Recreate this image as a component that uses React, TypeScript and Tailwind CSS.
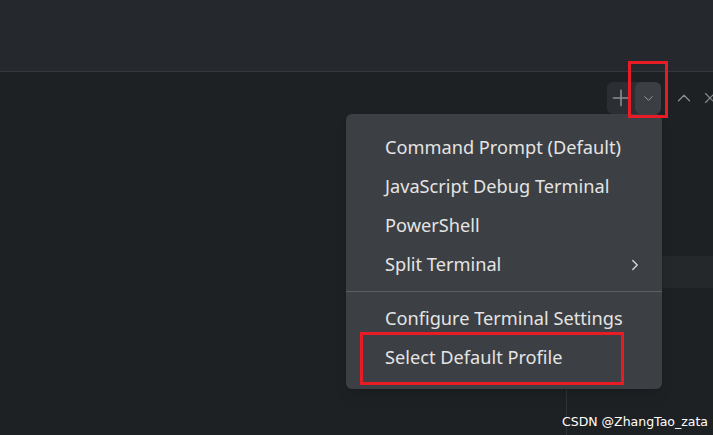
import { ChevronDown, ChevronUp, ChevronRight, Plus, X } from 'lucide-react';

const items = [
  { label: 'Command Prompt (Default)' },
  { label: 'JavaScript Debug Terminal' },
  { label: 'PowerShell' },
  { label: 'Split Terminal', sub: true },
];

export default function App() {
  return (
    <div
      className="relative w-[713px] h-[435px] overflow-hidden bg-[#1e2124] text-[#e4e4e4]"
      style={{ fontFamily: '"Noto Sans", "Open Sans", sans-serif' }}
    >
      {/* editor area */}
      <div className="h-[72px] bg-[#25282c] border-b border-[#35383c]" />

      {/* terminal toolbar */}
      <div className="flex items-start justify-end pt-[10px]">
        <div className="flex items-center">
          <div className="flex items-center rounded-md bg-[#2b2e32]">
            <div className="w-[28px] h-[32px] flex items-center justify-center text-[#8a8d91]">
              <Plus size={26} strokeWidth={1.5} />
            </div>
            <div className="w-[26px] h-[32px] rounded-md bg-[#3b3e42] flex items-center justify-center text-[#9a9da1]">
              <ChevronDown size={15} strokeWidth={1.5} />
            </div>
          </div>
          <div className="ml-[12px] w-[22px] flex items-center justify-center text-[#8a8d91]">
            <ChevronUp size={22} strokeWidth={1.4} />
          </div>
          <div className="ml-[6px] w-[12px] overflow-hidden text-[#8a8d91]">
            <X size={18} strokeWidth={1.5} />
          </div>
        </div>
      </div>

      {/* background band + divider */}
      <div className="absolute left-[662px] right-0 top-[256px] h-[32px] bg-[#25282b]" />
      <div className="absolute left-[566px] top-[388px] bottom-0 w-px bg-[#303336]" />

      {/* dropdown menu */}
      <div className="absolute left-[346px] top-[114px] w-[316px] rounded-md bg-[#3c3f43] pt-[14px] pb-[12px] text-[18.2px] shadow-lg">
        {items.map((item) => (
          <div key={item.label} className="flex items-center justify-between h-[39px] pl-[39px] pr-[18px]">
            <span>{item.label}</span>
            {item.sub && <ChevronRight size={18} strokeWidth={1.8} className="text-[#d8d8d8]" />}
          </div>
        ))}
        <div className="my-[7px] h-px bg-[#5b5e62]" />
        <div className="flex items-center h-[39px] pl-[39px]">Configure Terminal Settings</div>
        <div className="flex items-center h-[39px] pl-[39px]">Select Default Profile</div>
      </div>

      {/* annotation boxes */}
      <div className="absolute left-[628px] top-[61px] w-[40px] h-[57px] border-[3px] border-[#e81c24]" />
      <div className="absolute left-[360px] top-[332px] w-[264px] h-[53px] border-[3px] border-[#e81c24]" />

      <div
        className="absolute left-[562px] top-[413px] whitespace-nowrap text-[12.5px] text-white"
        style={{ fontFamily: '"DejaVu Sans", sans-serif' }}
      >
        CSDN @ZhangTao_zata
      </div>
    </div>
  );
}
